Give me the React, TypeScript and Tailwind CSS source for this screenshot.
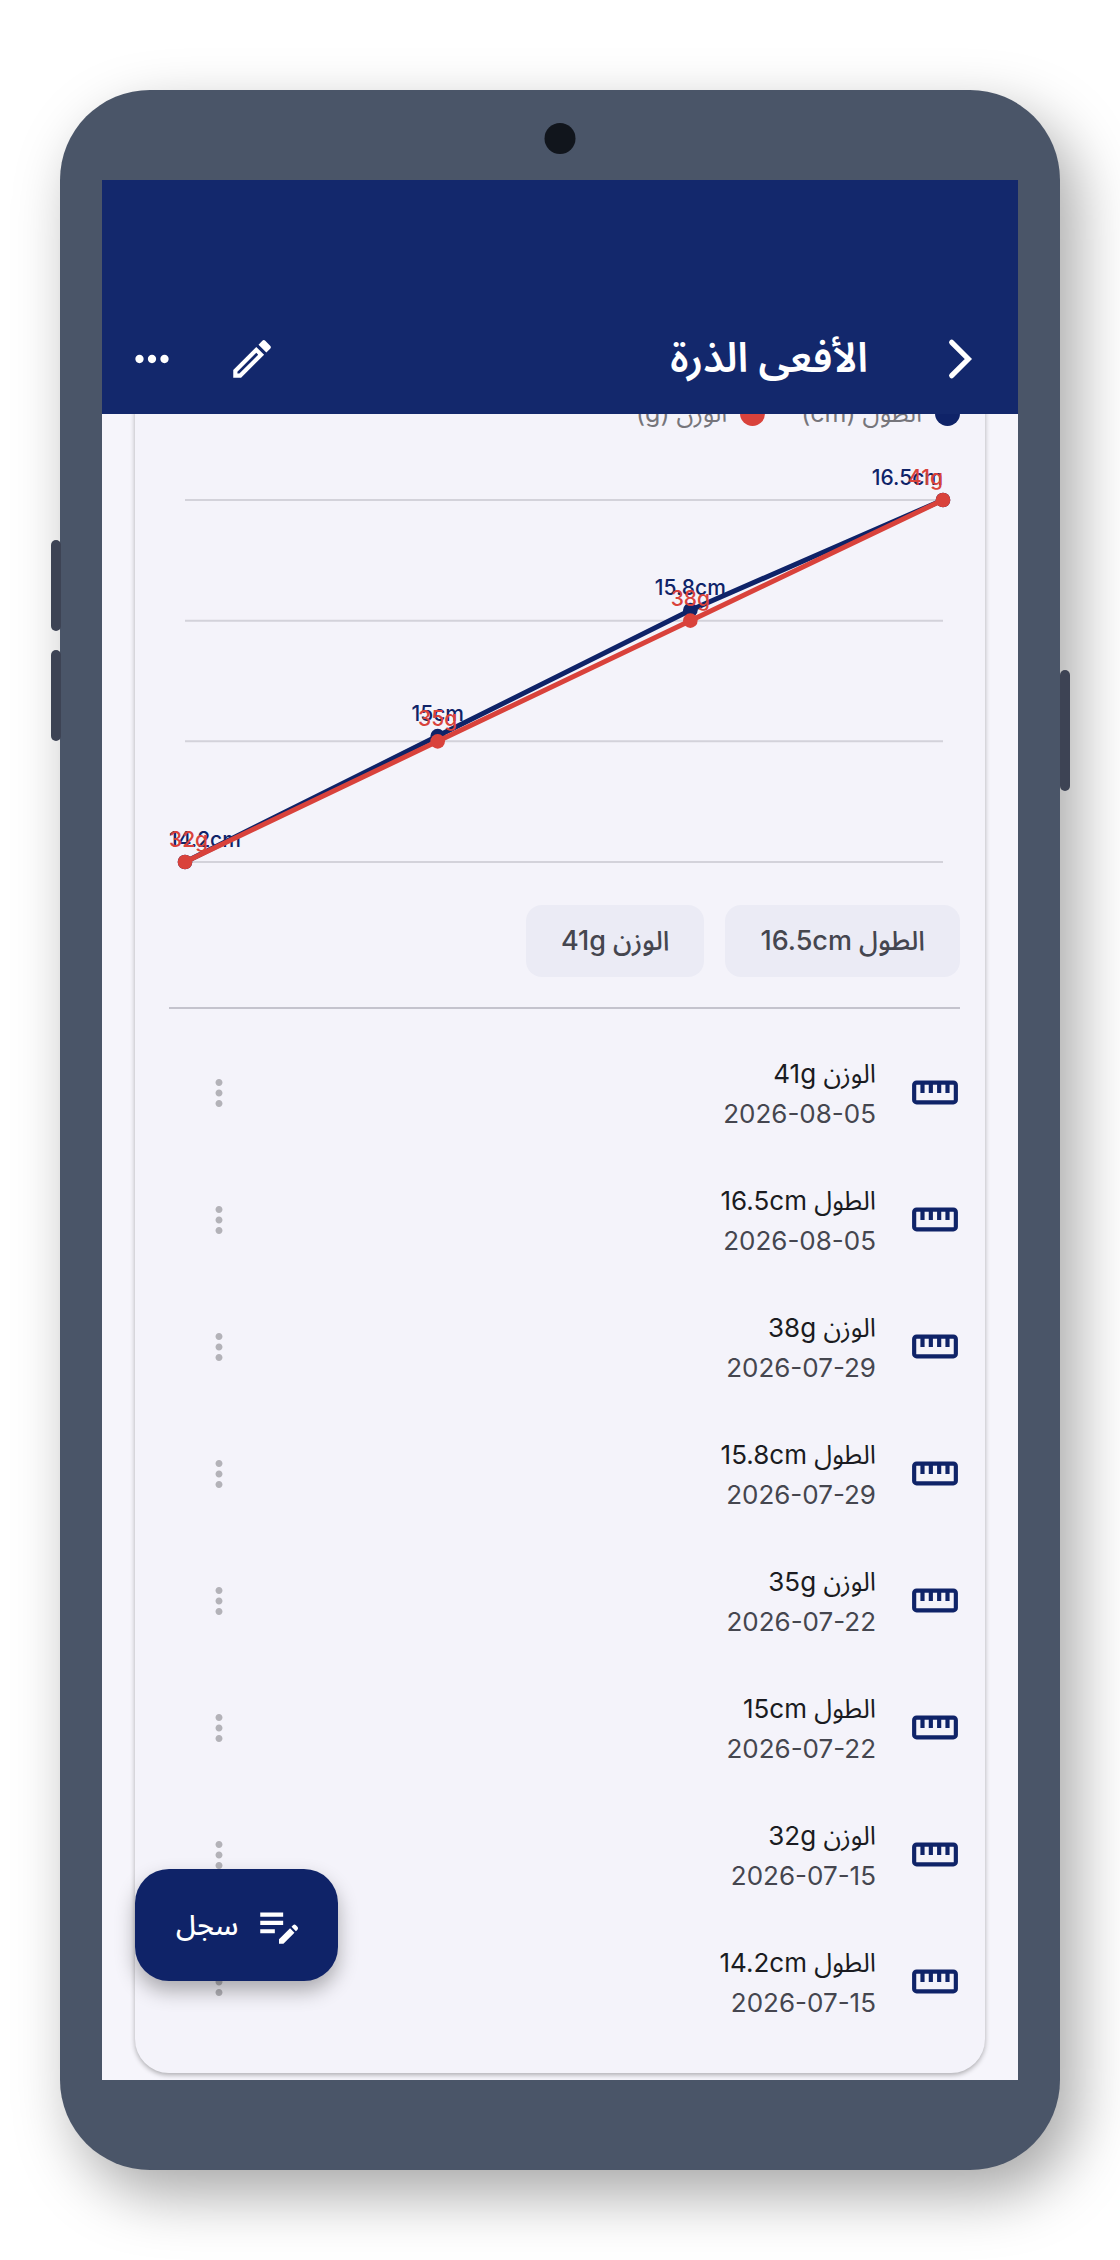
import React from 'react';
import { MdEditNote, MdMoreHoriz, MdMoreVert, MdOutlineModeEdit } from 'react-icons/md';

interface LogEntry {
  id: number;
  label: string;
  value: string;
  date: string;
}

interface Series {
  name: string;
  unit: string;
  color: string;
  values: number[];
}

const LOG_ENTRIES: LogEntry[] = [
  { id: 8, label: 'الوزن', value: '41g', date: '2026-08-05' },
  { id: 7, label: 'الطول', value: '16.5cm', date: '2026-08-05' },
  { id: 6, label: 'الوزن', value: '38g', date: '2026-07-29' },
  { id: 5, label: 'الطول', value: '15.8cm', date: '2026-07-29' },
  { id: 4, label: 'الوزن', value: '35g', date: '2026-07-22' },
  { id: 3, label: 'الطول', value: '15cm', date: '2026-07-22' },
  { id: 2, label: 'الوزن', value: '32g', date: '2026-07-15' },
  { id: 1, label: 'الطول', value: '14.2cm', date: '2026-07-15' },
];

const SERIES: Series[] = [
  { name: 'الطول', unit: 'cm', color: '#0f2368', values: [14.2, 15, 15.8, 16.5] },
  { name: 'الوزن', unit: 'g', color: '#d9423b', values: [32, 35, 38, 41] },
];

// Chart geometry, in viewBox units
const CHART = { width: 791, height: 448, left: 16, right: 774, top: 58, bottom: 420 };

const RulerIcon: React.FC<{ className?: string }> = ({ className }) => (
  <svg viewBox="0 0 24 24" className={className} fill="none" stroke="currentColor" strokeWidth="2" aria-hidden="true">
    <rect x="2" y="7" width="20" height="9.5" rx="1.2" />
    <path d="M6 7v5M10 7v5M14 7v5M18 7v5" />
  </svg>
);

const ChevronIcon: React.FC<{ className?: string }> = ({ className }) => (
  <svg viewBox="0 0 24 24" className={className} fill="none" stroke="currentColor" strokeWidth="2.5" strokeLinecap="round" aria-hidden="true">
    <path d="M8 4l8 8-8 8" />
  </svg>
);

const GrowthChart: React.FC = () => {
  const { width, height, left, right, top, bottom } = CHART;
  const gridLines = [0, 1, 2, 3].map(i => top + ((bottom - top) / 3) * i);

  return (
    <svg viewBox={`0 0 ${width} ${height}`} direction="ltr" className="block w-full" role="img" aria-label="الطول / الوزن">
      {gridLines.map(y => (
        <line key={y} x1={left} x2={right} y1={y} y2={y} stroke="#d3d2da" strokeWidth="2" />
      ))}
      {SERIES.map(({ unit, color, values }) => {
        const min = Math.min(...values);
        const max = Math.max(...values);
        const points = values.map((value, i) => ({
          value,
          x: left + ((right - left) / (values.length - 1)) * i,
          y: bottom - ((value - min) / (max - min)) * (bottom - top),
        }));
        return (
          <g key={unit}>
            <polyline
              points={points.map(p => `${p.x},${p.y}`).join(' ')}
              fill="none"
              stroke={color}
              strokeWidth="5"
            />
            {points.map((p, i) => {
              const isFirst = i === 0;
              const isLast = i === points.length - 1;
              return (
                <g key={p.x} fill={color}>
                  <circle cx={p.x} cy={p.y} r="7.3" />
                  <text
                    x={isFirst ? 0 : isLast ? right : p.x}
                    y={p.y - 15}
                    textAnchor={isFirst ? 'start' : isLast ? 'end' : 'middle'}
                    className="text-[21px] font-medium"
                  >
                    {p.value}{unit}
                  </text>
                </g>
              );
            })}
          </g>
        );
      })}
    </svg>
  );
};

const LogRow: React.FC<{ entry: LogEntry }> = ({ entry }) => (
  <li className="flex h-[127px] items-center">
    <RulerIcon className="size-[50px] shrink-0 text-[#0f2368]" />
    <div className="mr-[34px] flex-1 pt-[3px]">
      <p className="text-[26px] leading-[40px] text-[#1a1b21]">{entry.label} {entry.value}</p>
      <p className="text-[26px] leading-[40px] text-[#45464f]"><bdi>{entry.date}</bdi></p>
    </div>
    <button type="button" aria-label="المزيد" className="flex h-full w-[100px] items-center justify-center text-[#b3b2b8]">
      <MdMoreVert className="size-[42px]" />
    </button>
  </li>
);

const App: React.FC = () => {
  return (
    <div
      dir="rtl"
      className="overflow-hidden bg-white px-[60px] py-[90px] font-['Inter','Noto_Sans_Arabic','DejaVu_Sans',sans-serif]"
    >
      <div className="relative rounded-[90px] bg-[#4a5568] px-[42px] py-[90px] shadow-[16px_24px_60px_rgba(0,0,0,0.35)]">
        {/* Hardware buttons and camera */}
        <span className="absolute top-[450px] -left-[9px] h-[91px] w-[10px] rounded-full bg-[#3d4354]" />
        <span className="absolute top-[560px] -left-[9px] h-[91px] w-[10px] rounded-full bg-[#3d4354]" />
        <span className="absolute top-[580px] -right-[10px] h-[121px] w-[10px] rounded-full bg-[#3d4354]" />
        <span className="absolute top-[33px] left-1/2 size-[31px] -translate-x-1/2 rounded-full bg-[#11151c]" />

        <div className="relative overflow-hidden bg-[#f6f5fb]">
          <header className="relative z-10 flex items-center bg-[#13286c] pt-[124px] text-white">
            <button type="button" aria-label="رجوع" className="flex h-[110px] w-[116px] items-center justify-center">
              <ChevronIcon className="size-[50px]" />
            </button>
            <h1 className="flex-1 pr-[34px] pb-1 text-[41px] leading-[56px] font-semibold">الأفعى الذرة</h1>
            <button type="button" aria-label="تعديل" className="flex h-[110px] w-[100px] items-center justify-center">
              <MdOutlineModeEdit className="size-[50px]" />
            </button>
            <button type="button" aria-label="خيارات" className="flex h-[110px] w-[100px] items-center justify-center">
              <MdMoreHoriz className="size-[50px]" />
            </button>
          </header>

          <main className="px-[33px] pb-[7px]">
            {/* The card is scrolled a little way under the header */}
            <section className="-mt-4 rounded-b-[34px] bg-[#f4f3fa] pr-[25px] pb-7 pl-[34px] shadow-[0_2px_5px_rgba(0,0,0,0.3)]">
              <div className="flex gap-9">
                {SERIES.map(({ name, unit, color }) => (
                  <div key={unit} className="flex items-center gap-[13px]">
                    <span className="size-[25px] rounded-full" style={{ backgroundColor: color }} />
                    <span className="text-[25px] leading-[30px] text-[#76757b]">
                      {name} <bdi>({unit})</bdi>
                    </span>
                  </div>
                ))}
              </div>

              <div className="pt-[14px]">
                <GrowthChart />
              </div>

              <div className="mt-[15px] flex gap-[21px]">
                {SERIES.map(({ name, unit, values }) => (
                  <span key={unit} className="rounded-2xl bg-[#ebebf5] px-[35px] py-4 text-[27px] leading-[40px] font-medium text-[#45464f]">
                    {name} {values[values.length - 1]}{unit}
                  </span>
                ))}
              </div>

              <hr className="mt-[30px] mb-5 border-t-2 border-[#c4c3cd]" />

              <ul>
                {LOG_ENTRIES.map(entry => <LogRow key={entry.id} entry={entry} />)}
              </ul>
            </section>
          </main>

          <button
            type="button"
            className="absolute bottom-[99px] left-[33px] flex h-28 items-center gap-4 rounded-[34px] bg-[#0f2368] pr-[34px] pl-[41px] text-[28px] font-medium text-white shadow-[0_10px_20px_rgba(0,0,0,0.3)]"
          >
            <MdEditNote className="size-[50px]" />
            سجل
          </button>
        </div>
      </div>
    </div>
  );
};

export default App;
